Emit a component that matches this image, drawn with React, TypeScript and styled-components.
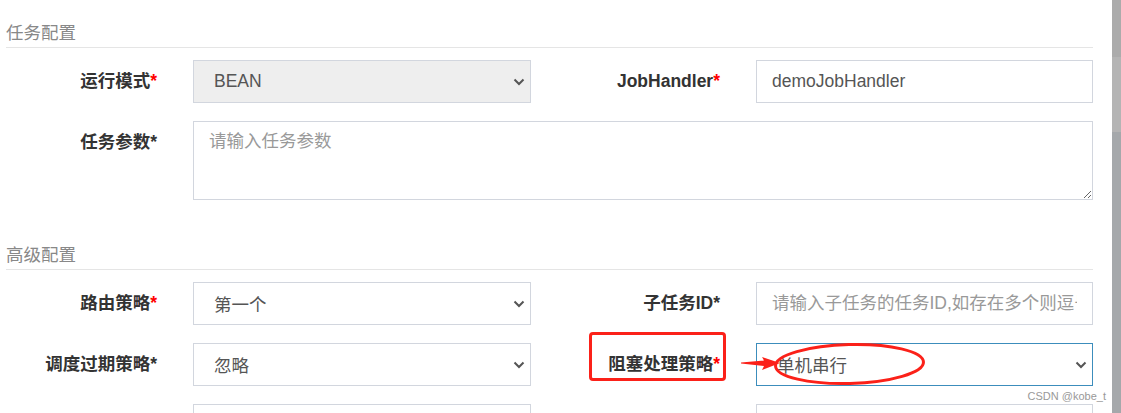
import React from 'react';
import styled, { createGlobalStyle, css } from 'styled-components';

const GlobalStyle = createGlobalStyle`
  html, body {
    margin: 0;
    padding: 0;
    overflow: hidden;
    background: #fff;
  }
  body {
    font-family: "Liberation Sans", "Noto Sans CJK SC", sans-serif;
  }
`;

const Page = styled.div`
  position: relative;
  display: flex;
  width: 1121px;
  height: 413px;
  overflow: hidden;
  background: #fff;
`;

const Main = styled.div`
  flex: 1;
  min-width: 0;
  padding: 22px 19px 0 6px;
`;

const Scrollbar = styled.div`
  flex: none;
  width: 9px;
  background: linear-gradient(to bottom, #ababab 0 57px, #b4b4b4 57px 132px, #a5a8ab 132px);
`;

const Section = styled.section<{ $first?: boolean }>`
  margin-top: ${(p) => (p.$first ? 0 : 44)}px;
`;

const Legend = styled.div`
  font-size: 17.5px;
  line-height: 22px;
  color: #888;
  padding-bottom: 3px;
  border-bottom: 1px solid #e5e5e5;
  margin-bottom: 12px;
`;

const FormGrid = styled.div`
  display: grid;
  grid-template-columns: 187px 338px 225px 337px;
  row-gap: 18px;
  align-items: start;
`;

const Label = styled.label`
  position: relative;
  min-height: 43px;
  text-align: right;
  padding-right: 36px;
  font-size: 17.5px;
  font-weight: 700;
  line-height: 43px;
  color: #333;
  white-space: nowrap;
`;

const Star = styled.span<{ $red?: boolean }>`
  color: ${(p) => (p.$red ? '#ff0000' : '#333')};
`;

const fieldBase = css`
  box-sizing: border-box;
  height: 43px;
  border: 1px solid #d2d6de;
  border-radius: 0;
  font-family: inherit;
  font-size: 17.5px;
  color: #555;
  background: #fff;
  outline: none;
`;

const TextInput = styled.input`
  ${fieldBase};
  width: 100%;
  padding: 0 15px;

  &::placeholder {
    color: #999;
  }
`;

const SelectBox = styled.div<{ $disabled?: boolean; $focused?: boolean }>`
  ${fieldBase};
  position: relative;
  display: flex;
  align-items: center;
  justify-content: space-between;
  padding: 0 5px 0 20px;
  background: ${(p) => (p.$disabled ? '#eee' : '#fff')};
  border-color: ${(p) => (p.$focused ? '#3c8dbc' : '#d2d6de')};
`;

const TextArea = styled.textarea`
  ${fieldBase};
  grid-column: 2 / 5;
  height: 79px;
  padding: 7px 15px;
  line-height: 25px;
  resize: vertical;

  &::placeholder {
    color: #999;
  }
`;

const RedBox = styled.span`
  position: absolute;
  left: 58px;
  top: -11px;
  width: 137px;
  height: 49px;
  box-sizing: border-box;
  border: 3px solid #fb2119;
  border-radius: 4px;
`;

const Annotation = styled.svg`
  position: absolute;
  left: -18px;
  top: -2px;
  overflow: visible;
`;

const Watermark = styled.div`
  position: absolute;
  right: 15px;
  top: 390px;
  font-size: 11px;
  line-height: 13px;
  color: #999;
`;

const Chevron = () => (
  <svg width="12" height="8" viewBox="0 0 12 8">
    <polyline points="1.5,1.5 6,6 10.5,1.5" fill="none" stroke="#555" strokeWidth="2" />
  </svg>
);

interface SelectProps {
  value: string;
  disabled?: boolean;
  focused?: boolean;
  children?: React.ReactNode;
}

const Select: React.FC<SelectProps> = ({ value, disabled, focused, children }) => (
  <SelectBox $disabled={disabled} $focused={focused}>
    <span>{value}</span>
    <Chevron />
    {children}
  </SelectBox>
);

const App: React.FC = () => {
  return (
    <Page>
      <GlobalStyle />
      <Main>
        <Section $first>
          <Legend>任务配置</Legend>
          <FormGrid>
            <Label>
              运行模式<Star $red>*</Star>
            </Label>
            <Select value="BEAN" disabled />
            <Label>
              JobHandler<Star $red>*</Star>
            </Label>
            <TextInput defaultValue="demoJobHandler" />

            <Label>
              任务参数<Star>*</Star>
            </Label>
            <TextArea placeholder="请输入任务参数" />
          </FormGrid>
        </Section>

        <Section>
          <Legend>高级配置</Legend>
          <FormGrid>
            <Label>
              路由策略<Star $red>*</Star>
            </Label>
            <Select value="第一个" />
            <Label>
              子任务ID<Star>*</Star>
            </Label>
            <TextInput placeholder="请输入子任务的任务ID,如存在多个则逗号分隔" />

            <Label>
              调度过期策略<Star>*</Star>
            </Label>
            <Select value="忽略" />
            <Label>
              <RedBox />
              阻塞处理策略<Star $red>*</Star>
            </Label>
            <Select value="单机串行" focused>
              <Annotation width="190" height="46" viewBox="0 0 190 46">
                <polygon points="2,20.5 25,18.5 23,15 41,21 23,28 25,24 2,21.5" fill="#fb2119" />
                <ellipse
                  cx="110.5"
                  cy="22"
                  rx="74"
                  ry="19.5"
                  fill="none"
                  stroke="#fb2119"
                  strokeWidth="3"
                  transform="rotate(-1.5 110.5 22)"
                />
              </Annotation>
            </Select>

            <Label />
            <TextInput />
            <Label />
            <TextInput />
          </FormGrid>
        </Section>
      </Main>
      <Scrollbar />
      <Watermark>CSDN @kobe_t</Watermark>
    </Page>
  );
};

export default App;
